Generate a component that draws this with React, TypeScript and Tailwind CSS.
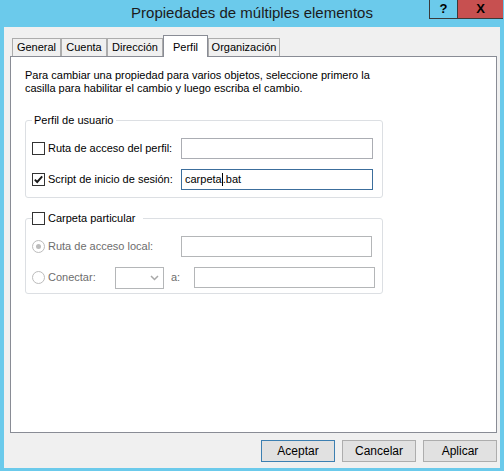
const font = { fontFamily: '"Liberation Sans", Arial, sans-serif' };

function CheckBox({ checked = false }: { checked?: boolean }) {
  return (
    <span className="w-[13px] h-[13px] shrink-0 border border-[#333333] bg-white flex items-center justify-center">
      {checked && (
        <svg width="11" height="11" viewBox="0 0 11 11">
          <path d="M1.8 5.6 L4.2 8 L9.2 2.4" fill="none" stroke="#1a1a1a" strokeWidth="1.9" />
        </svg>
      )}
    </span>
  );
}

function Radio({ checked = false }: { checked?: boolean }) {
  return (
    <span className="w-[13px] h-[13px] shrink-0 rounded-full border border-[#bcbcbc] bg-white flex items-center justify-center">
      {checked && <span className="w-[5px] h-[5px] rounded-full bg-[#bcbcbc]" />}
    </span>
  );
}

function TextBox({ w, disabled, focused, children }: { w: string; disabled?: boolean; focused?: boolean; children?: React.ReactNode }) {
  return (
    <div
      className={
        "h-[21px] bg-white border flex items-center px-[3px] text-[11px] text-black " +
        w +
        (focused ? " border-[#3c6e9c]" : disabled ? " border-[#b4b6b8]" : " border-[#abadb3]")
      }
    >
      {children}
    </div>
  );
}

const tabs = [
  { label: "General", w: "w-[49px]" },
  { label: "Cuenta", w: "w-[46px]" },
  { label: "Dirección", w: "w-[56px]" },
  { label: "Perfil", w: "w-[45px]", active: true },
  { label: "Organización", w: "w-[72px]" },
];

export default function App() {
  return (
    <div className="w-[504px] h-[471px] bg-[#6bcaeb] flex flex-col overflow-hidden" style={font}>
      {/* barra de título */}
      <div className="relative h-[27px] shrink-0 flex items-center justify-center">
        <span className="text-[15px] text-[#1b1b1b]">Propiedades de múltiples elementos</span>
        <div className="absolute top-0 right-[1px] flex">
          <div className="w-[29px] h-[19px] border-l border-r border-b border-[#3a3a3a] flex items-center justify-center text-[13px] font-bold text-black">
            ?
          </div>
          <div className="w-[45px] h-[19px] bg-[#c75050] border-b border-[#3a3a3a] flex items-center justify-center text-[13px] font-bold text-black">
            X
          </div>
        </div>
      </div>

      {/* área cliente */}
      <div className="mx-[4px] h-[441px] bg-[#f0f0f0] pl-[6px] pr-[3px] pt-[8px] flex flex-col">
        <div className="flex items-end h-[21px] pl-[2px]">
          {tabs.map((t) =>
            t.active ? (
              <div
                key={t.label}
                className={"relative z-10 h-[22px] -mb-px bg-white border-t border-l border-r border-[#898c95] flex justify-center pt-[3px] text-[11px] text-black " + t.w}
              >
                {t.label}
              </div>
            ) : (
              <div
                key={t.label}
                className={"h-[18px] bg-[#f0f0f0] border-t border-l border-r border-[#acacac] flex items-center justify-center text-[11px] text-black " + t.w}
              >
                {t.label}
              </div>
            ),
          )}
        </div>

        <div className="h-[377px] bg-white border border-[#898c95] pl-[14px] pt-[12px]">
          <p className="text-[11px] leading-[13px] text-black w-[365px]">
            Para cambiar una propiedad para varios objetos, seleccione primero la casilla para habilitar el cambio y luego escriba el cambio.
          </p>

          <fieldset className="mt-[19px] w-[358px] border border-[#dcdfe3] rounded-[3px] px-[6px] pt-[11px] pb-[7px]">
            <legend className="px-[2px] text-[11px] leading-[13px] text-black">Perfil de usuario</legend>
            <div className="flex flex-col gap-[10px]">
              <div className="flex items-center h-[21px]">
                <div className="w-[149px] flex items-center gap-[3px]">
                  <CheckBox />
                  <span className="text-[11px] text-black">Ruta de acceso del perfil:</span>
                </div>
                <TextBox w="w-[192px]" />
              </div>
              <div className="flex items-center h-[21px]">
                <div className="w-[149px] flex items-center gap-[3px]">
                  <CheckBox checked />
                  <span className="text-[11px] text-black">Script de inicio de sesión:</span>
                </div>
                <TextBox w="w-[192px]" focused>
                  <span>carpeta</span>
                  <span className="w-px h-[13px] bg-black" />
                  <span>.bat</span>
                </TextBox>
              </div>
            </div>
          </fieldset>

          <fieldset className="mt-[14px] w-[358px] border border-[#dcdfe3] rounded-[3px] px-[6px] pt-[11px] pb-[5px]">
            <legend className="pr-[8px] text-[11px] leading-[13px] text-black">
              <span className="flex items-center gap-[3px]">
                <CheckBox />
                <span>Carpeta particular</span>
              </span>
            </legend>
            <div className="flex flex-col gap-[10px]">
              <div className="flex items-center h-[21px]">
                <div className="w-[149px] flex items-center gap-[3px]">
                  <Radio checked />
                  <span className="text-[11px] text-[#6d6d6d]">Ruta de acceso local:</span>
                </div>
                <TextBox w="w-[191px]" disabled />
              </div>
              <div className="flex items-center h-[21px]">
                <div className="w-[83px] flex items-center gap-[3px]">
                  <Radio />
                  <span className="text-[11px] text-[#6d6d6d]">Conectar:</span>
                </div>
                <div className="w-[49px] h-[22px] bg-white border border-[#b4b6b8] flex items-center justify-end pr-[4px]">
                  <svg width="9" height="6" viewBox="0 0 9 6">
                    <path d="M1 1 L4.5 4.5 L8 1" fill="none" stroke="#a8a8a8" strokeWidth="1.5" />
                  </svg>
                </div>
                <span className="ml-[7px] w-[23px] text-[11px] text-[#6d6d6d]">a:</span>
                <TextBox w="w-[181px]" disabled />
              </div>
            </div>
          </fieldset>
        </div>

        <div className="mt-[7px] flex justify-end gap-[7px]">
          <button className="w-[74px] h-[22px] bg-[#e1e1e1] border border-[#3c7fb1] text-[12px] text-black">Aceptar</button>
          <button className="w-[74px] h-[22px] bg-[#e1e1e1] border border-[#adadad] text-[12px] text-black">Cancelar</button>
          <button className="w-[74px] h-[22px] bg-[#e1e1e1] border border-[#adadad] text-[12px] text-black">Aplicar</button>
        </div>
      </div>
    </div>
  );
}
